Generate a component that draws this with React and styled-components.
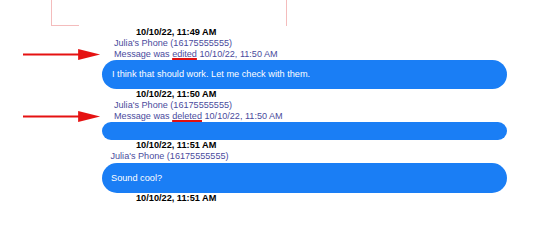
import React from "react";
import styled, { createGlobalStyle } from "styled-components";

const GlobalStyle = createGlobalStyle`
  html, body {
    margin: 0;
    padding: 0;
    background: #ffffff;
  }
  body {
    font-family: "Liberation Sans", Arial, Helvetica, sans-serif;
  }
`;

const messages = [
  {
    time: "10/10/22, 11:49 AM",
    sender: "Julia's Phone (16175555555)",
    status: { word: "edited", when: "10/10/22, 11:50 AM" },
    text: "I think that should work. Let me check with them.",
  },
  {
    time: "10/10/22, 11:50 AM",
    sender: "Julia's Phone (16175555555)",
    status: { word: "deleted", when: "10/10/22, 11:50 AM" },
    text: "",
  },
  {
    time: "10/10/22, 11:51 AM",
    sender: "Julia's Phone (16175555555)",
    text: "Sound cool?",
  },
];

function Arrow() {
  return (
    <svg width="86" height="13" viewBox="0 0 86 13">
      <line x1="0" y1="6.5" x2="64" y2="6.5" stroke="#e51212" strokeWidth="2" />
      <polygon points="60,0.5 84,6.5 60,12.5" fill="#e51212" />
    </svg>
  );
}

export default function App() {
  return (
    <Page>
      <GlobalStyle />
      <HeaderBox />
      <Thread>
        {messages.map((m, i) => (
          <Group key={i}>
            <Stamp>{m.time}</Stamp>
            <Sender $indent={m.status ? 12 : 8.5}>{m.sender}</Sender>
            {m.status && (
              <>
                <ArrowCell>
                  <Arrow />
                </ArrowCell>
                <Status>
                  Message was <Marked>{m.status.word}</Marked> {m.status.when}
                </Status>
              </>
            )}
            <Bubble $tall={!m.status}>{m.text}</Bubble>
          </Group>
        ))}
        <Group>
          <Stamp>10/10/22, 11:51 AM</Stamp>
        </Group>
      </Thread>
    </Page>
  );
}

const Page = styled.div`
  width: 547px;
  height: 229px;
  overflow: hidden;
  background: #ffffff;
`;

const HeaderBox = styled.div`
  position: relative;
  margin-left: 51px;
  width: 236px;
  height: 26px;
  box-sizing: border-box;
  border-left: 1px solid #f4bcbc;
  border-right: 1px solid #f4bcbc;
  margin-bottom: 1px;
  &::after {
    content: "";
    position: absolute;
    left: 0;
    bottom: 0;
    width: 27px;
    border-bottom: 1px solid #f4bcbc;
  }
`;

const Thread = styled.div`
  display: flex;
  flex-direction: column;
`;

const Group = styled.div`
  display: grid;
  grid-template-columns: 102px 405px;
  align-items: center;
`;

const Stamp = styled.div`
  grid-column: 2;
  padding-left: 34px;
  font-size: 9.2px;
  line-height: 11px;
  font-weight: bold;
  color: #000000;
`;

const Sender = styled.div`
  grid-column: 2;
  padding-left: ${(p) => p.$indent}px;
  font-size: 9.1px;
  line-height: 11px;
  color: #4a4b9d;
`;

const ArrowCell = styled.div`
  grid-column: 1;
  display: flex;
  align-items: center;
  padding-left: 23px;
  height: 10px;
`;

const Status = styled.div`
  grid-column: 2;
  padding-left: 12px;
  font-size: 9.1px;
  line-height: 10px;
  color: #4a4b9d;
`;

const Marked = styled.span`
  text-decoration: underline;
  text-decoration-color: #e01010;
  text-decoration-thickness: 2px;
  text-underline-offset: 1px;
  text-decoration-skip-ink: none;
`;

const Bubble = styled.div`
  grid-column: 2;
  margin-top: 1px;
  min-height: 11px;
  padding: ${(p) => (p.$tall ? "9.5px 9px" : "9px 10px")};
  border-radius: 15px;
  background: #1a7ef5;
  color: #ffffff;
  font-size: 9.2px;
  line-height: 11px;
  &:empty {
    min-height: 0;
    height: 0;
    border-radius: 9px;
  }
`;
